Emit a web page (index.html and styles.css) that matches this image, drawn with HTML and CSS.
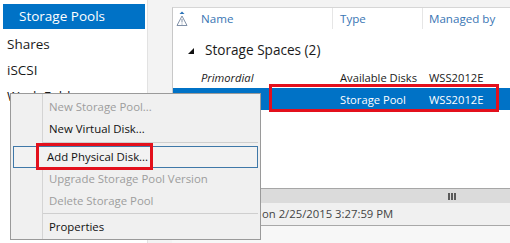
FILE: index.html
```html
<!DOCTYPE html>
<html lang="en">

<head>
    <meta charset="UTF-8">
    <title>Storage Pools</title>
    <link rel="stylesheet" href="styles.css">
</head>

<body>
    <div class="window">

        <!-- Navigasi kiri -->
        <div class="nav">
            <div class="nav-item active">Storage Pools</div>
            <div class="nav-item">Shares</div>
            <div class="nav-item">iSCSI</div>
            <div class="nav-item">Work Folders</div>
        </div>

        <!-- Panel utama -->
        <div class="main">
            <div class="list">
                <div class="list-head">
                    <div class="col col-icon">
                        <svg width="12" height="16" viewBox="0 0 12 16">
                            <path d="M3.5 3 L6 0.5 L8.5 3 Z" fill="#2a72b8"/>
                            <path d="M6 5 L11 14.5 L1 14.5 Z" fill="none" stroke="#7f8fa6" stroke-width="1"/>
                            <path d="M6 8 V11.5 M6 12.5 V13.5" stroke="#7f8fa6" stroke-width="1"/>
                        </svg>
                    </div>
                    <div class="col col-name">Name</div>
                    <div class="col col-type">Type</div>
                    <div class="col col-owner">Managed by</div>
                </div>

                <div class="group-row">
                    <span class="caret"></span>
                    <span>Storage Spaces (2)</span>
                </div>

                <div class="row">
                    <div class="col col-icon"></div>
                    <div class="col col-name italic">Primordial</div>
                    <div class="col col-type">Available Disks</div>
                    <div class="col col-owner">WSS2012E</div>
                </div>

                <div class="row selected">
                    <div class="col col-icon"><span class="pool-icon"></span></div>
                    <div class="col col-name"></div>
                    <div class="col col-type">Storage Pool</div>
                    <div class="col col-owner">WSS2012E</div>
                </div>
            </div>

            <div class="hscroll">
                <div class="grip"><span></span><span></span><span></span></div>
            </div>
            <div class="status">on 2/25/2015 3:27:59 PM</div>
            <div class="footer"></div>
        </div>
    </div>

    <!-- Menu konteks -->
    <div class="context-menu">
        <div class="menu-item disabled">New Storage Pool...</div>
        <div class="menu-item">New Virtual Disk...</div>
        <div class="menu-sep"></div>
        <div class="menu-item hover">Add Physical Disk...</div>
        <div class="menu-item disabled">Upgrade Storage Pool Version</div>
        <div class="menu-item disabled">Delete Storage Pool</div>
        <div class="menu-sep tight"></div>
        <div class="menu-item">Properties</div>
    </div>

    <!-- Kotak sorotan merah -->
    <div class="mark mark-menu"></div>
    <div class="mark mark-row"></div>
</body>

</html>
```

FILE: styles.css
```css
/* Tampilan Server Manager - Storage Pools */

body {
    margin: 0;
    font-family: "Open Sans", "Noto Sans", sans-serif;
    background-color: #f3f3f3;
    width: 510px;
    height: 243px;
    overflow: hidden;
    position: relative;
}

.window {
    display: flex;
    height: 243px;
}
/* Navigasi kiri */

.nav {
    width: 144px;
    padding: 4px 0 0 3px;
    background-color: #fff;
    border-right: 1px solid #e2e2e2;
}

.nav-item {
    height: 26px;
    line-height: 26px;
    padding-left: 4px;
    font-size: 13.5px;
    color: #1a1a1a;
    margin-right: 2px;
}

.nav-item.active {
    background-color: #0072c6;
    color: #fff;
    padding-left: 16px;
    height: 25px;
    line-height: 25px;
    margin-bottom: 2px;
}
/* Panel utama */

.main {
    flex: 1;
    display: flex;
    flex-direction: column;
    padding-left: 24px;
    padding-top: 7px;
    background-color: #f3f3f3;
}

.list {
    height: 180px;
    background-color: #fff;
    border-top: 1px solid #d6d6d6;
    border-left: 1px solid #c8c8c8;
}

.list-head,
.row {
    display: flex;
    align-items: center;
}

.list-head {
    height: 21px;
    color: #3a76b4;
    font-size: 11.6px;
}

.col {
    height: 100%;
    display: flex;
    align-items: center;
    box-sizing: border-box;
    white-space: nowrap;
}

.col-icon {
    width: 22px;
    padding-left: 3px;
}

.col-name {
    width: 138px;
    padding-left: 6px;
}

.col-type {
    width: 90px;
    padding-left: 7px;
}

.col-owner {
    flex: 1;
    padding-left: 6px;
}

.list-head .col-name,
.list-head .col-type {
    border-right: 1px solid #e6e6e6;
}

.group-row {
    height: 33px;
    margin-top: 4px;
    display: flex;
    align-items: center;
    padding-left: 15px;
    font-size: 13.6px;
    color: #1a1a1a;
}

.caret {
    width: 0;
    height: 0;
    border-left: 6px solid transparent;
    border-bottom: 6px solid #111;
    margin-right: 11px;
    margin-top: 2px;
}

.row {
    height: 22px;
    font-size: 11.2px;
    color: #1a1a1a;
}

.italic {
    font-style: italic;
}

.row.selected {
    background-color: #0072c6;
    color: #fff;
}

.pool-icon {
    display: inline-block;
    width: 6px;
    height: 4px;
    margin-left: 11px;
    margin-top: 10px;
    background-color: #c8a86a;
    border-radius: 3px 3px 0 0;
}
/* Bilah bawah */

.hscroll {
    height: 14px;
    background-color: #dbdbdb;
    border-top: 1px solid #a6a6a6;
    display: flex;
    justify-content: flex-end;
    align-items: center;
    padding-right: 54px;
}

.grip {
    display: flex;
    gap: 1px;
}

.grip span {
    width: 2px;
    height: 7px;
    background-color: #5a5a5a;
}

.status {
    height: 22px;
    line-height: 22px;
    padding-left: 90px;
    font-size: 11.3px;
    color: #444;
    background-color: #f0f0f0;
    border-bottom: 1px solid #a8a8a8;
}

.footer {
    flex: 1;
    background-color: #f7f7f7;
}
/* Menu konteks */

.context-menu {
    position: absolute;
    left: 10px;
    top: 93px;
    width: 249px;
    height: 143px;
    padding: 2px 0 0 0;
    background-color: #f0f0f0;
    border: 1px solid #9a9a9a;
    background-image: linear-gradient(#d4d4d4, #d4d4d4);
    background-size: 1px 100%;
    background-position: 31px 0;
    background-repeat: no-repeat;
    font-size: 11.4px;
}

.menu-item {
    height: 22px;
    line-height: 22px;
    padding-left: 36px;
    margin: 0 2px;
    color: #111;
    white-space: nowrap;
    overflow: hidden;
    box-sizing: border-box;
}

.menu-item.disabled {
    color: #9d9d9d;
}

.menu-item.hover {
    border: 1px solid #3f78a8;
    background-color: #f2f2f2;
    line-height: 20px;
    padding-left: 33px;
}

.menu-sep {
    height: 1px;
    margin: 2px 2px 3px 32px;
    background-color: #cfcfcf;
}

.menu-sep.tight {
    margin: 1px 2px 2px 32px;
}
/* Kotak penanda merah */

.mark {
    position: absolute;
    border: 3px solid #e3101c;
    box-sizing: border-box;
}

.mark-menu {
    left: 36px;
    top: 143px;
    width: 117px;
    height: 27px;
}

.mark-row {
    left: 269px;
    top: 84px;
    width: 230px;
    height: 28px;
}
```
